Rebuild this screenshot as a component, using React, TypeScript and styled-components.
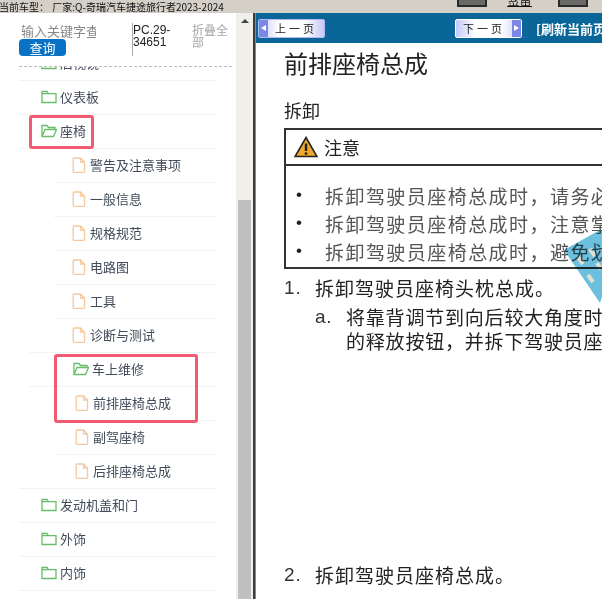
import styled, { createGlobalStyle } from 'styled-components';

const CJK = `"Noto Sans CJK SC", "Liberation Sans", sans-serif`;

const Global = createGlobalStyle`
    html, body {
        margin: 0;
        padding: 0;
        height: 100%;
        overflow: hidden;
        background: #fff;
        font-family: ${CJK};
    }
    #root { height: 100%; }
`;

const Page = styled.div`
    width: 602px;
    height: 599px;
    display: flex;
    flex-direction: column;
    overflow: hidden;
`;

const TopBar = styled.div`
    height: 13px;
    flex: none;
    display: flex;
    background: #d4d0c8;
    font-size: 10px;
    line-height: 13px;
    color: #111;
    overflow: hidden;
`;

const CarLabel = styled.div`
    width: 440px;
    white-space: pre;
    word-spacing: 1px;
    margin-left: -1px;
`;

const MenuStub = styled.div<{ $left: number }>`
    width: 30px;
    height: 7px;
    margin-left: ${(p) => p.$left}px;
    box-sizing: border-box;
    background: #6a6a68;
    border: 2px solid #2a2a2a;
    border-top: none;
`;

const MenuText = styled.div`
    width: 25px;
    height: 7px;
    margin-left: 20px;
    box-sizing: border-box;
    border-bottom: 1px solid #111;
    font-size: 12px;
    line-height: 8px;
    overflow: hidden;
    text-align: center;
`;

const Body = styled.div`
    flex: 1;
    display: flex;
    min-height: 0;
`;

const Side = styled.div`
    width: 236px;
    flex: none;
    position: relative;
    display: flex;
    flex-direction: column;
    background: #fff;
`;

const SearchHead = styled.div`
    height: 54px;
    flex: none;
    margin: 0 4px 0 19px;
    box-sizing: border-box;
    border-bottom: 1px dashed #bbb;
    display: flex;
    padding-top: 10px;
`;

const SearchCol = styled.div`
    width: 113px;
    flex: none;
`;

const KeywordText = styled.div`
    font-size: 13px;
    line-height: 16px;
    color: #888;
    margin-left: 2px;
    width: 75px;
    overflow: hidden;
    white-space: nowrap;
`;

const QueryButton = styled.div`
    width: 47px;
    height: 17px;
    background: #0a72c4;
    border-radius: 4px;
    color: #fff;
    font-size: 13px;
    line-height: 17px;
    text-align: center;
`;

const PartCode = styled.div`
    width: 60px;
    flex: none;
    height: 33px;
    box-sizing: border-box;
    padding-top: 1px;
    border-left: 1px solid #aaa;
    font-size: 12px;
    line-height: 12px;
    color: #222;
    font-family: "Liberation Sans", sans-serif;
`;

const Collapse = styled.div`
    font-size: 12px;
    line-height: 12px;
    color: #a5a5a5;
    width: 38px;
    padding-top: 1px;
`;

const TreeClip = styled.div`
    flex: 1;
    overflow: hidden;
`;

const Tree = styled.div`
    margin-top: -20px;
`;

const Row = styled.div<{ $indent: number; $line: number }>`
    height: 34px;
    box-sizing: border-box;
    display: flex;
    align-items: center;
    margin-left: ${(p) => p.$line}px;
    width: ${(p) => 216 - p.$line}px;
    padding-left: ${(p) => p.$indent - p.$line}px;
    padding-bottom: 2px;
    border-bottom: 1px solid #f3f3f3;
    gap: 2px;
    font-size: 13px;
    color: #414b59;
`;

const FolderGlyph = styled.svg`
    width: 16px;
    height: 14px;
    flex: none;
    fill: none;
    stroke: #67bd68;
    stroke-width: 1.3;
    margin-right: 1px;
`;

const FileGlyph = styled.svg`
    width: 14px;
    height: 16px;
    flex: none;
    fill: none;
    stroke: #f5c9a0;
    stroke-width: 1.3;
    margin-right: 2px;
`;

const Mark = styled.div<{ $x: number; $y: number; $w: number; $h: number }>`
    position: absolute;
    left: ${(p) => p.$x}px;
    top: ${(p) => p.$y}px;
    width: ${(p) => p.$w}px;
    height: ${(p) => p.$h}px;
    box-sizing: border-box;
    border: 3px solid #f25c72;
    border-radius: 3px;
`;

const ScrollBar = styled.div`
    width: 17px;
    flex: none;
    background: #f1efea;
    display: flex;
    flex-direction: column;
    box-sizing: border-box;
`;

const ScrollArrow = styled.div`
    height: 16px;
    display: flex;
    align-items: center;
    justify-content: center;
    &::before {
        content: '';
        border-left: 4px solid transparent;
        border-right: 4px solid transparent;
        border-bottom: 4px solid #444;
    }
`;

const ScrollSpace = styled.div`
    height: 171px;
`;

const ScrollThumb = styled.div`
    flex: 1;
    background: #c0c0c0;
    margin: 0 2px;
`;

const Splitter = styled.div`
    width: 3px;
    flex: none;
    background: #3c3c3c;
    border-right: 1px solid #888;
    box-sizing: border-box;
`;

const Main = styled.div`
    flex: 1;
    min-width: 0;
    overflow: hidden;
    display: flex;
    flex-direction: column;
    position: relative;
`;

const NavBar = styled.div`
    height: 30px;
    flex: none;
    background: #0a6699;
    display: flex;
    align-items: center;
    padding-left: 2px;
    white-space: nowrap;
`;

const PageButton = styled.div<{ $next?: boolean }>`
    width: 67px;
    height: 19px;
    flex: none;
    margin-left: ${(p) => (p.$next ? 130 : 0)}px;
    box-sizing: border-box;
    display: flex;
    flex-direction: ${(p) => (p.$next ? 'row-reverse' : 'row')};
    align-items: stretch;
    background: linear-gradient(90deg, #c4c8f8 0%, #ffffff 30%, #ffffff 70%, #c4c8f8 100%);
    border: 1px solid ${(p) => (p.$next ? '#ffffff' : '#b4b8f0')};
    border-radius: 2px;
    font-size: 11px;
    color: #222;
`;

const PageArrow = styled.div<{ $next?: boolean }>`
    width: 9px;
    background: #7c86e6;
    display: flex;
    align-items: center;
    justify-content: center;
    &::before {
        content: '';
        border-top: 3px solid transparent;
        border-bottom: 3px solid transparent;
        ${(p) => (p.$next ? 'border-left: 5px solid #fff;' : 'border-right: 5px solid #fff;')}
    }
`;

const PageLabel = styled.div`
    flex: 1;
    text-align: center;
    line-height: 16px;
    letter-spacing: 3px;
`;

const UnderlineStub = styled.div`
    width: 5px;
    height: 1px;
    flex: none;
    background: #2a5fd0;
    align-self: flex-end;
    margin: 0 8px 5px 1px;
`;

const Refresh = styled.div`
    flex: none;
    color: #fff;
    font-size: 13px;
    font-weight: 700;
`;

const Doc = styled.div`
    flex: 1;
    padding: 5px 0 0 28px;
    background: #fff;
    color: #222;
    white-space: nowrap;
`;

const Title = styled.div`
    font-size: 24px;
    line-height: 30px;
`;

const Section = styled.div`
    font-size: 18px;
    line-height: 24px;
    margin-top: 20px;
`;

const Notice = styled.div`
    margin-top: 6px;
    width: 400px;
    height: 141px;
    box-sizing: border-box;
    border: 2px solid #333;
`;

const NoticeHead = styled.div`
    height: 36px;
    box-sizing: border-box;
    border-bottom: 2px solid #333;
    display: flex;
    align-items: center;
    gap: 6px;
    padding-left: 8px;
    font-size: 18px;
`;

const NoticeList = styled.div`
    padding-top: 15px;
`;

const NoticeItem = styled.div`
    display: flex;
    height: 28px;
    align-items: center;
    font-family: "Liberation Serif", "Noto Sans CJK SC", serif;
    font-size: 19px;
    color: #555;
    letter-spacing: 1.45px;
`;

const Bullet = styled.span`
    width: 39px;
    flex: none;
    padding-left: 10px;
    box-sizing: border-box;
    color: #222;
    font-size: 17px;
    font-family: "Liberation Sans", sans-serif;
`;

const Step = styled.div`
    display: flex;
    font-size: 19px;
    line-height: 24px;
    margin-top: 7px;
    letter-spacing: 1px;
`;

const StepNum = styled.span`
    width: 31px;
    flex: none;
    font-family: "Liberation Sans", sans-serif;
    color: #333;
`;

const SubStep = styled.div`
    display: flex;
    margin-left: 31px;
    margin-top: 5px;
    font-size: 19px;
    line-height: 23.5px;
    letter-spacing: 0.8px;
`;

const SubNum = styled.span`
    width: 31px;
    flex: none;
    font-family: "Liberation Sans", sans-serif;
    color: #333;
`;

const LaterStep = styled(Step)`
    margin-top: 211px;
`;

const Stamp = styled.svg`
    position: absolute;
    left: 308px;
    top: 212px;
    width: 38px;
    height: 80px;
    mix-blend-mode: multiply;
`;

const Folder = ({ open }: { open?: boolean }) => (
    <FolderGlyph viewBox="0 0 16 14">
        {open ? (
            <path d="M1 12.5V1.5h5l1.5 2H14v2M1 12.5h11.5L15.5 5.5H4L1 12.5z" />
        ) : (
            <path d="M1 12.5V1.5h5l1.5 2.2H15v8.8z M1 3.7h6.5" />
        )}
    </FolderGlyph>
);

const File = () => (
    <FileGlyph viewBox="0 0 14 16">
        <path d="M2 1h6.5L12.5 5v9.5a.8.8 0 0 1-.8.8H2a.8.8 0 0 1-.8-.8V1.8A.8.8 0 0 1 2 1zM8.5 1v4h4" />
    </FileGlyph>
);

type Item = { label: string; type: 'closed' | 'open' | 'file'; indent: number; line: number };

const items: Item[] = [
    { label: '后视镜', type: 'closed', indent: 41, line: 19 },
    { label: '仪表板', type: 'closed', indent: 41, line: 19 },
    { label: '座椅', type: 'open', indent: 41, line: 19 },
    { label: '警告及注意事项', type: 'file', indent: 72, line: 54 },
    { label: '一般信息', type: 'file', indent: 72, line: 54 },
    { label: '规格规范', type: 'file', indent: 72, line: 54 },
    { label: '电路图', type: 'file', indent: 72, line: 54 },
    { label: '工具', type: 'file', indent: 72, line: 54 },
    { label: '诊断与测试', type: 'file', indent: 72, line: 29 },
    { label: '车上维修', type: 'open', indent: 73, line: 29 },
    { label: '前排座椅总成', type: 'file', indent: 75, line: 54 },
    { label: '副驾座椅', type: 'file', indent: 75, line: 54 },
    { label: '后排座椅总成', type: 'file', indent: 75, line: 19 },
    { label: '发动机盖和门', type: 'closed', indent: 41, line: 19 },
    { label: '外饰', type: 'closed', indent: 41, line: 19 },
    { label: '内饰', type: 'closed', indent: 41, line: 19 },
];

const App = () => {
    return (
        <Page>
            <Global />
            <TopBar>
                <CarLabel>当前车型： 厂家:Q-奇瑞汽车捷途旅行者2023-2024</CarLabel>
                <MenuStub $left={18} />
                <MenuText>菜单</MenuText>
                <MenuStub $left={26} />
            </TopBar>
            <Body>
                <Side>
                    <SearchHead>
                        <SearchCol>
                            <KeywordText>输入关键字查询</KeywordText>
                            <QueryButton>查询</QueryButton>
                        </SearchCol>
                        <PartCode>PC.29-34651</PartCode>
                        <Collapse>折叠全部</Collapse>
                    </SearchHead>
                    <TreeClip>
                        <Tree>
                            {items.map((item) => (
                                <Row key={item.label} $indent={item.indent} $line={item.line}>
                                    {item.type === 'file' ? <File /> : <Folder open={item.type === 'open'} />}
                                    {item.label}
                                </Row>
                            ))}
                        </Tree>
                    </TreeClip>
                    <Mark $x={29} $y={102} $w={65} $h={34} />
                    <Mark $x={54} $y={341} $w={144} $h={69} />
                </Side>
                <ScrollBar>
                    <ScrollArrow />
                    <ScrollSpace />
                    <ScrollThumb />
                </ScrollBar>
                <Splitter />
                <Main>
                    <NavBar>
                        <PageButton>
                            <PageArrow />
                            <PageLabel>上一页</PageLabel>
                        </PageButton>
                        <PageButton $next>
                            <PageArrow $next />
                            <PageLabel>下一页</PageLabel>
                        </PageButton>
                        <UnderlineStub />
                        <Refresh>[刷新当前页]</Refresh>
                    </NavBar>
                    <Doc>
                        <Title>前排座椅总成</Title>
                        <Section>拆卸</Section>
                        <Notice>
                            <NoticeHead>
                                <svg width="24" height="22" viewBox="0 0 24 22">
                                    <path d="M12 1.5 23 20.5H1z" fill="#f0a92a" stroke="#222" strokeWidth="1.6" />
                                    <path d="M12 7.5v7.5" stroke="#222" strokeWidth="2.4" />
                                    <circle cx="12" cy="17.6" r="1.4" fill="#222" />
                                </svg>
                                注意
                            </NoticeHead>
                            <NoticeList>
                                <NoticeItem><Bullet>•</Bullet>拆卸驾驶员座椅总成时，请务必断开蓄电池</NoticeItem>
                                <NoticeItem><Bullet>•</Bullet>拆卸驾驶员座椅总成时，注意掌握正确方法</NoticeItem>
                                <NoticeItem><Bullet>•</Bullet>拆卸驾驶员座椅总成时，避免划伤内饰件表</NoticeItem>
                            </NoticeList>
                        </Notice>
                        <Step><StepNum>1.</StepNum>拆卸驾驶员座椅头枕总成。</Step>
                        <SubStep>
                            <SubNum>a.</SubNum>
                            <div>
                                将靠背调节到向后较大角度时，按下头枕<br />
                                的释放按钮，并拆下驾驶员座椅头枕总成
                            </div>
                        </SubStep>
                        <LaterStep><StepNum>2.</StepNum>拆卸驾驶员座椅总成。</LaterStep>
                    </Doc>
                    <Stamp viewBox="0 0 38 80">
                        <path d="M0 25 34 6 38 6V72L36 78z" fill="#6cc0dd" />
                        <path d="M14 32l5 7M26 24l5 7M24 50l5 7M33 38l4 6" stroke="#e2e0d4" strokeWidth="4" />
                    </Stamp>
                </Main>
            </Body>
        </Page>
    );
};

export default App;
